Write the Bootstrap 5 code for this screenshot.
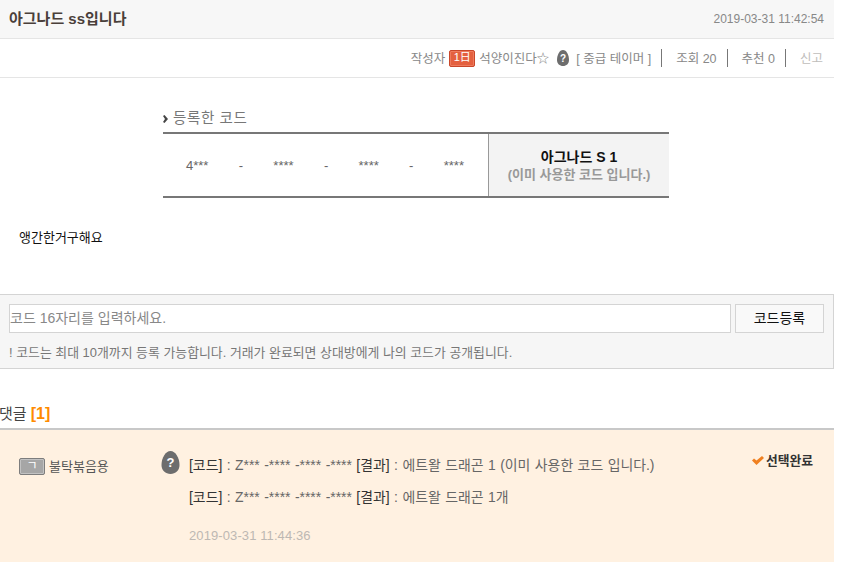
<!DOCTYPE html>
<html lang="ko">
<head>
<meta charset="utf-8">
<title>아그나드 ss입니다</title>
<link href="https://cdn.jsdelivr.net/npm/bootstrap@5.3.0/dist/css/bootstrap.min.css" rel="stylesheet">
<style>
html,body{height:562px;overflow:hidden}
body{background:#fff;font-family:"Liberation Sans","Noto Sans CJK KR",sans-serif;font-size:13px;color:#666;line-height:1.2}
.page-wrap{width:834px;height:562px;overflow:hidden}
.head-bar{height:39px;background:#f7f7f7;border-bottom:1px solid #e5e5e5;padding:0 10px 0 9px}
.head-title{font-size:15px;font-weight:700;color:#4a3f3a;margin:0}
.head-date{color:#888;font-size:12px}
.meta-bar{height:39px;border-bottom:1px solid #e5e5e5;padding:0 11px 0 10px;color:#888;font-size:12.5px}
.meta-txt{padding-top:3px}
.lvl-tag{width:26px;height:17px;background:#e4603f;border:1px solid #c9472a;border-radius:2px;box-shadow:inset 0 0 0 1px #ee7b5d;color:#fff;font-size:11px;margin:0 4px}
.egg{flex:none;display:block}
.egg-small{margin:0 7px 0 8px}
.egg-big{margin-top:-1px}
.split{border-left:1px solid #777;height:18px;margin:0 14px 0 10px}
.faded{color:#c0bdbb}
.code-wrap{width:506px;margin:31px 0 0 163px}
.code-head{font-size:14.5px;color:#777;height:23px;padding-bottom:4px;letter-spacing:.6px;column-gap:5px}
.code-table{height:66px;border-top:2px solid #777;border-bottom:2px solid #777}
.code-left{width:325px;padding:2px 24px 0 23px;color:#666;font-size:13px}
.code-right{flex:1;background:#f3f3f3;border-left:1px solid #999;font-size:13px;padding-top:2px}
.code-name{color:#111;font-weight:700;line-height:18px;font-size:14px}
.code-used{color:#999;font-weight:700;line-height:18px}
.body-text{color:#111;margin:32px 0 0 19px;height:16px;font-size:13px}
.form-box{margin-top:48px;height:75px;background:#f6f6f6;border:1px solid #d4d4d4;border-left:0;padding:9px 9px 0 9px}
.code-input{flex:1;height:29px;background:#fff;border:1px solid #d4d4d4;color:#888;font-size:14px;padding-left:0;line-height:27px}
.code-btn{width:89px;height:29px;margin-left:4px;background:#f9f9f9;border:1px solid #d4d4d4;border-radius:0;color:#111;font-size:14px;padding:0}
.form-note{margin-top:12px;color:#777;font-size:12.9px}
.reply-title{margin:36px 0 0 -1px;height:23px;font-size:15px;color:#444;line-height:18px}
.reply-count{color:#ff8a00;font-weight:700;font-size:16px}
.reply-box{height:134px;background:#fff1e1;border-top:2px solid #c8c8c8;position:relative;padding-top:22px}
.user-col{width:161px;padding:6px 0 0 19px;color:#555}
.user-name{margin-top:1px}
.lvl-grey{width:26px;height:17px;background:#a6a6a6;border:1px solid #7d7d7d;border-radius:2px;box-shadow:inset 0 0 0 1px #c2c2c2;color:#fff;font-size:12px;margin-right:4px}
.reply-body{padding:5px 0 0 9px;color:#666;font-size:13.9px;word-spacing:.6px}
.reply-line{height:32px;line-height:16px}
.reply-key{color:#333}
.reply-date{margin-top:7px;color:#bdb8b3;font-size:13px;letter-spacing:.1px;word-spacing:0}
.picked{position:absolute;right:21px;top:23px;color:#333;font-weight:700;font-size:12.8px;column-gap:2px}
</style>
</head>
<body>
<div class="page-wrap">
  <div class="head-bar d-flex align-items-center justify-content-between">
    <h1 class="head-title">아그나드 ss입니다</h1>
    <span class="head-date">2019-03-31 11:42:54</span>
  </div>
  <div class="meta-bar d-flex align-items-center justify-content-end">
    <span class="meta-txt">작성자</span>
    <span class="lvl-tag d-inline-flex align-items-center justify-content-center">1日</span>
    <span class="meta-txt">석양이진다☆</span>
    <svg class="egg egg-small" width="12" height="16" viewBox="0 0 12 16"><path d="M6 0C9.500 0 12 5 12 10c0 3.800-2.600 6-6 6s-6-2.200-6-6C0 5 2.500 0 6 0Z" fill="#6d6d6d"/><text x="6" y="11.500" text-anchor="middle" font-size="10" font-weight="700" fill="#fff" font-family="Liberation Sans">?</text></svg>
    <span class="meta-txt">[ 중급 테이머 ]</span>
    <span class="split"></span>
    <span class="meta-txt">조회 20</span>
    <span class="split"></span>
    <span class="meta-txt">추천 0</span>
    <span class="split"></span>
    <span class="meta-txt faded">신고</span>
  </div>
  <div class="code-wrap">
    <div class="code-head d-flex align-items-center">
      <svg width="5" height="8" viewBox="0 0 5 8"><path d="M1.500 0L5 4 1.500 8 0 7l2-3-2-3Z" fill="#444"/></svg>
      <span>등록한 코드</span>
    </div>
    <div class="code-table d-flex">
      <div class="code-left d-flex align-items-center justify-content-between">
        <span>4***</span><span>-</span><span>****</span><span>-</span><span>****</span><span>-</span><span>****</span>
      </div>
      <div class="code-right d-flex flex-column align-items-center justify-content-center">
        <div class="code-name">아그나드 S 1</div>
        <div class="code-used">(이미 사용한 코드 입니다.)</div>
      </div>
    </div>
  </div>
  <div class="body-text">앵간한거구해요</div>
  <div class="form-box">
    <div class="d-flex">
      <div class="code-input">코드 16자리를 입력하세요.</div>
      <button type="button" class="btn code-btn">코드등록</button>
    </div>
    <div class="form-note">! 코드는 최대 10개까지 등록 가능합니다. 거래가 완료되면 상대방에게 나의 코드가 공개됩니다.</div>
  </div>
  <div class="reply-title">댓글 <span class="reply-count">[1]</span></div>
  <div class="reply-box d-flex">
    <div class="user-col d-flex align-items-start">
      <span class="lvl-grey d-inline-flex align-items-center justify-content-center">ㄱ</span>
      <span class="user-name">불탁볶음용</span>
    </div>
    <svg class="egg egg-big" width="19" height="23" viewBox="0 0 19 23"><path d="M9.500 0C14.500 0 18.500 7 18.500 14c0 5.500-4 9-9 9s-9-3.500-9-9C.5 7 4.500 0 9.500 0Z" fill="#6d6d6d"/><text x="9.500" y="16" text-anchor="middle" font-size="13" font-weight="700" fill="#fff" font-family="Liberation Sans">?</text></svg>
    <div class="reply-body">
      <div class="reply-line"><span class="reply-key">[코드]</span> : Z*** -**** -**** -**** <span class="reply-key">[결과]</span> : 에트왈 드래곤 1 (이미 사용한 코드 입니다.)</div>
      <div class="reply-line"><span class="reply-key">[코드]</span> : Z*** -**** -**** -**** <span class="reply-key">[결과]</span> : 에트왈 드래곤 1개</div>
      <div class="reply-date">2019-03-31 11:44:36</div>
    </div>
    <div class="picked d-flex align-items-center">
      <svg width="12" height="9" viewBox="0 0 12 9"><path d="M0 4.500l2-2 2.500 2L10 0l2 2-7.500 7Z" fill="#f08020"/></svg>
      <span>선택완료</span>
    </div>
  </div>
</div>
<script src="https://cdn.jsdelivr.net/npm/bootstrap@5.3.0/dist/js/bootstrap.bundle.min.js"></script>
</body>
</html>
